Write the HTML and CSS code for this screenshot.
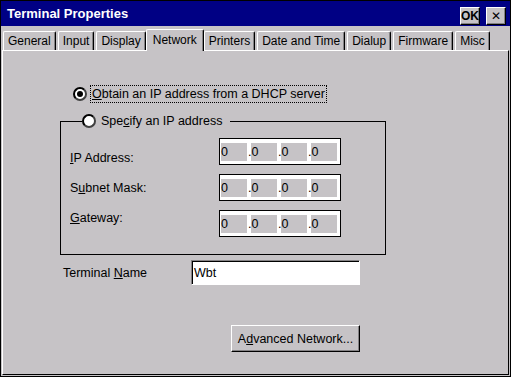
FILE: index.html
```html
<!DOCTYPE html>
<html lang="en">
<head>
    <meta charset="UTF-8">
    <title>Terminal Properties</title>
    <link rel="stylesheet" href="styles.css">
</head>
<body>
<div class="window">
    <div class="titlebar">
        <span class="title">Terminal Properties</span>
        <div class="caption-buttons">
            <span class="cap-btn ok">OK</span>
            <span class="cap-btn close">&#x2715;</span>
        </div>
    </div>

    <div class="tabs">
        <span class="tab">General</span>
        <span class="tab">Input</span>
        <span class="tab">Display</span>
        <span class="tab active">Network</span>
        <span class="tab">Printers</span>
        <span class="tab">Date and Time</span>
        <span class="tab">Dialup</span>
        <span class="tab">Firmware</span>
        <span class="tab">Misc</span>
    </div>

    <div class="panel">
        <div class="radio-row">
            <span class="radio checked"></span>
            <span class="radio-label focused"><u>O</u>btain an IP address from a DHCP server</span>
        </div>

        <fieldset class="group">
            <legend class="radio-row">
                <span class="radio"></span>
                <span class="radio-label">Spe<u>c</u>ify an IP address</span>
            </legend>
            <div class="ip-section">
                <div class="ip-labels">
                    <span class="ip-label"><u>I</u>P Address:</span>
                    <span class="ip-label">S<u>u</u>bnet Mask:</span>
                    <span class="ip-label"><u>G</u>ateway:</span>
                </div>
                <div class="ip-fields">
                    <div class="ip-field">
                        <span class="octet">0</span>
                        <span class="octet dot">.0</span>
                        <span class="octet dot">.0</span>
                        <span class="octet dot">.0</span>
                    </div>
                    <div class="ip-field">
                        <span class="octet">0</span>
                        <span class="octet dot">.0</span>
                        <span class="octet dot">.0</span>
                        <span class="octet dot">.0</span>
                    </div>
                    <div class="ip-field">
                        <span class="octet">0</span>
                        <span class="octet dot">.0</span>
                        <span class="octet dot">.0</span>
                        <span class="octet dot">.0</span>
                    </div>
                </div>
            </div>
        </fieldset>

        <div class="name-row">
            <span class="name-label">Terminal <u>N</u>ame</span>
            <span class="textbox">Wbt</span>
        </div>

        <div class="actions">
            <span class="button">A<u>d</u>vanced Network...</span>
        </div>
    </div>
</div>
</body>
</html>
```

FILE: styles.css
```css
body {
    margin: 0;
    padding: 0;
    font-family: "Liberation Sans", Arial, sans-serif;
    font-size: 12.5px;
    color: #000;
    background: #c6c3c6;
}

u {
    text-decoration: underline;
    text-underline-offset: 1px;
}

.window {
    box-sizing: border-box;
    width: 511px;
    height: 377px;
    border: 1px solid #000;
    background: #c6c3c6;
    display: flex;
    flex-direction: column;
}

.titlebar {
    height: 25px;
    background: #000084;
    display: flex;
    align-items: center;
    justify-content: space-between;
    padding-left: 6px;
}

.title {
    color: #fff;
    font-weight: bold;
    font-size: 13px;
}

.caption-buttons {
    display: flex;
    gap: 6px;
    align-self: flex-end;
    padding-right: 4px;
    padding-bottom: 1px;
}

.cap-btn {
    box-sizing: border-box;
    width: 20px;
    height: 18px;
    background: #c6c3c6;
    border: 1px solid;
    border-color: #fff #000 #000 #fff;
    box-shadow: inset -1px -1px #848284;
    display: flex;
    align-items: center;
    justify-content: center;
    font-size: 12px;
    line-height: 1;
}

.cap-btn.ok {
    font-weight: bold;
    font-size: 12px;
}

.cap-btn.close {
    font-size: 12px;
}

.tabs {
    display: flex;
    align-items: flex-end;
    gap: 2px;
    height: 22px;
    margin-top: 2px;
    padding-left: 2px;
    font-size: 12px;
    position: relative;
    z-index: 1;
}

.tab {
    box-sizing: border-box;
    flex-shrink: 0;
    white-space: nowrap;
    height: 19px;
    padding: 0 4px;
    border: 1px solid;
    border-color: #fff #000 transparent #fff;
    border-bottom: none;
    border-radius: 2px 2px 0 0;
    box-shadow: inset -1px 0 #848284;
    display: flex;
    align-items: center;
}

.tab.active {
    height: 22px;
    margin: 0 -2px -1px;
    padding: 0 6px 2px;
    background: #c6c3c6;
}

.panel {
    flex: 1;
    margin: 0 1px 1px;
    border: 1px solid;
    border-color: #fff #000 #000 #fff;
    padding: 34px 0 0 57px;
}

.radio-row {
    display: flex;
    align-items: center;
    gap: 3px;
    padding-left: 13px;
}

.radio {
    box-sizing: border-box;
    width: 14px;
    height: 14px;
    border-radius: 50%;
    border: 2px solid;
    border-color: #000 #404040 #404040 #000;
    background: #fff;
    display: flex;
    align-items: center;
    justify-content: center;
}

.radio.checked::after {
    content: "";
    width: 6px;
    height: 6px;
    border-radius: 50%;
    background: #000;
}

.radio-label {
    padding: 1px 1px;
    border: 1px dotted transparent;
}

.radio-label.focused {
    border-color: #000;
}

.group {
    box-sizing: border-box;
    width: 326px;
    margin: 11px 0 0;
    padding: 0 0 17px 9px;
    border: 1px solid #000;
}

.group legend {
    padding: 0 8px 0 0;
    margin-left: 12px;
}

.group legend .radio-label {
    border: none;
    padding: 0 0 0 2px;
}

.ip-section {
    display: flex;
    margin-top: 10px;
}

.ip-labels {
    width: 149px;
    display: flex;
    flex-direction: column;
    padding-top: 13px;
    gap: 15px;
}

.ip-label {
    line-height: 15px;
}

.ip-fields {
    display: flex;
    flex-direction: column;
    gap: 9px;
}

.ip-field {
    display: flex;
    gap: 4px;
    padding: 4px 3px 3px 1px;
    background: #fff;
    border: 1px solid #000;
}

.octet {
    width: 26px;
    height: 18px;
    line-height: 18px;
    background: #c6c3c6;
}

.octet.dot {
    text-indent: -3px;
}

.name-row {
    display: flex;
    align-items: center;
    margin: 5px 0 0 3px;
}

.name-label {
    width: 128px;
}

.textbox {
    box-sizing: border-box;
    width: 169px;
    height: 25px;
    background: #fff;
    border: 1px solid;
    border-color: #848284 #fff #fff #848284;
    box-shadow: inset 1px 1px #000;
    padding-left: 2px;
    display: flex;
    align-items: center;
}

.actions {
    width: 297px;
    margin: 40px 0 0 3px;
    display: flex;
    justify-content: flex-end;
}

.button {
    box-sizing: border-box;
    width: 129px;
    height: 27px;
    border: 1px solid;
    border-color: #fff #000 #000 #fff;
    box-shadow: inset -1px -1px #848284;
    display: flex;
    align-items: center;
    justify-content: center;
}
```
